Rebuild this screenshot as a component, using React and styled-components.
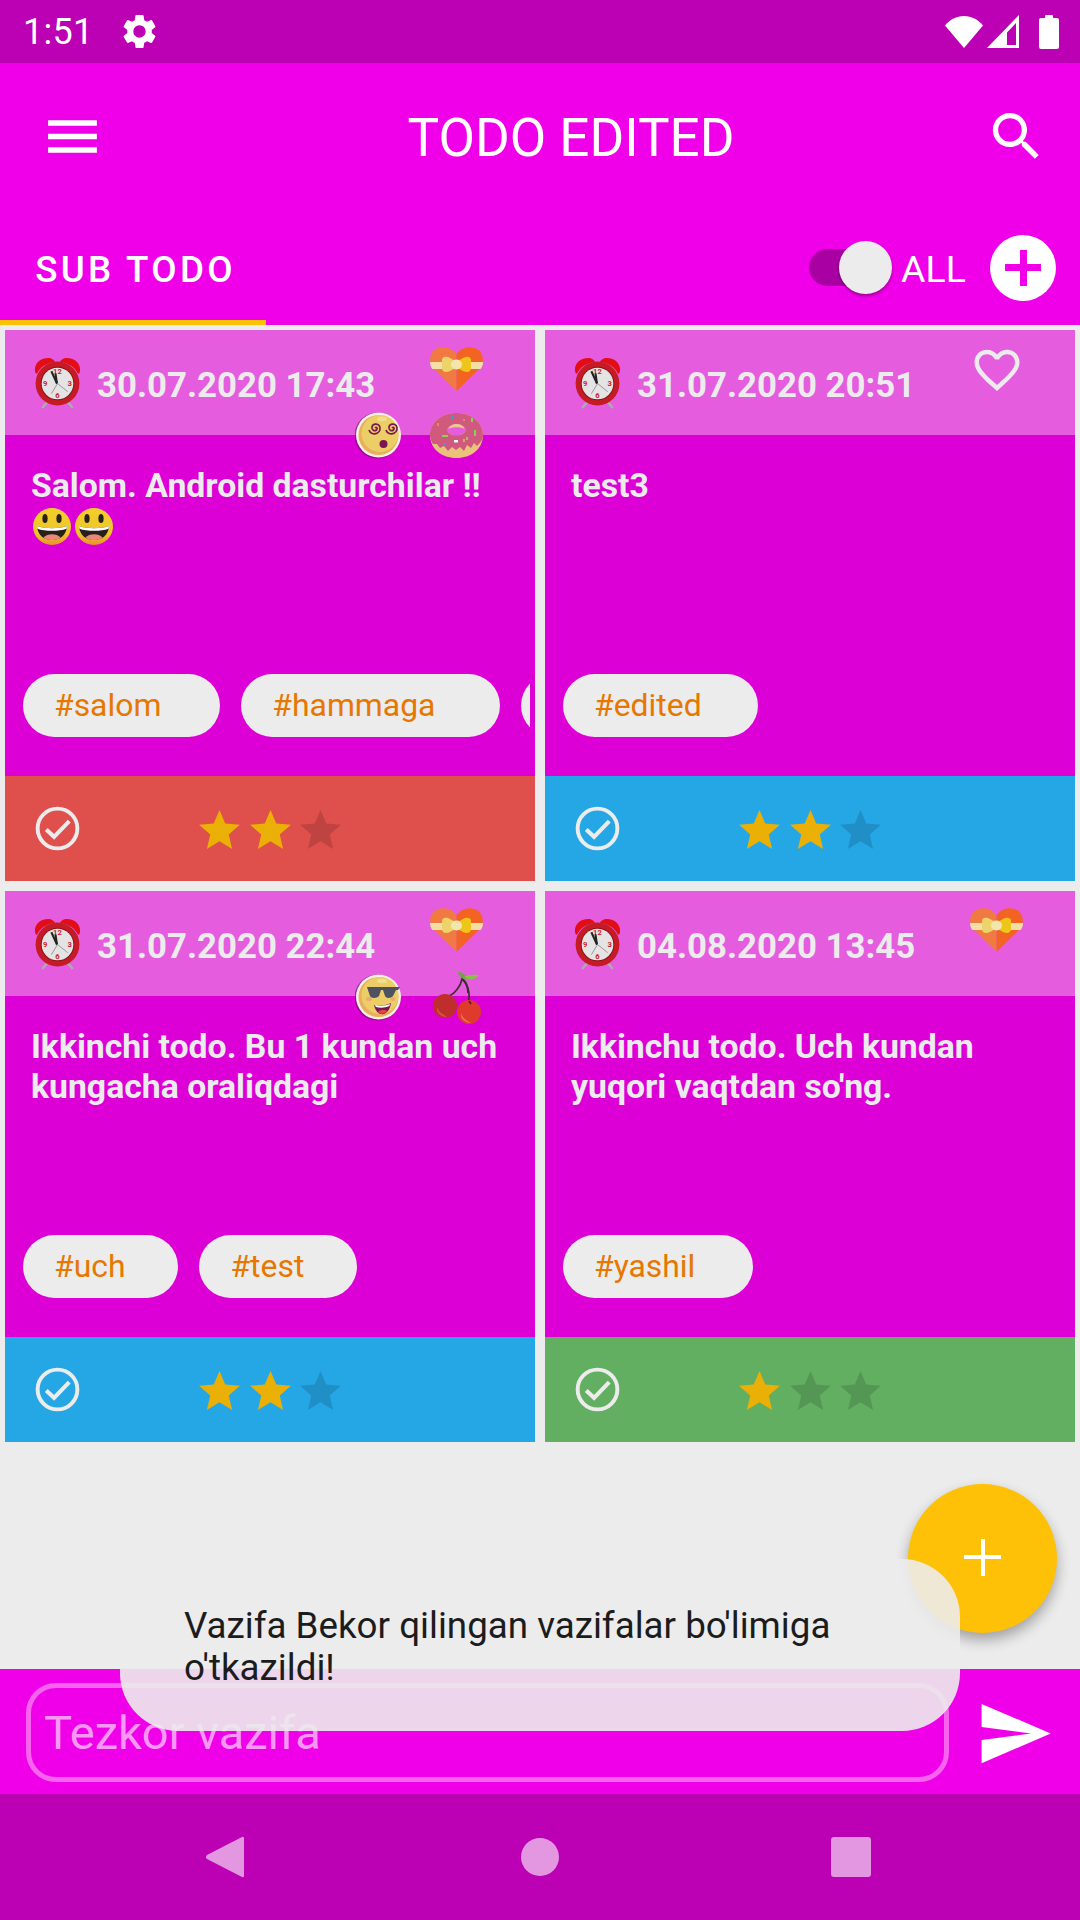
import React from 'react';
import styled, { createGlobalStyle } from 'styled-components';

const Global = createGlobalStyle`
  html, body { margin: 0; padding: 0; background: #ececec; }
  * { box-sizing: border-box; }
  body { font-family: Roboto, "Liberation Sans", sans-serif; }
`;

const Screen = styled.div`
  position: relative; width: 1080px; height: 1920px; overflow: hidden;
  display: flex; flex-direction: column; background: #ececec;
`;
const StatusBar = styled.div`
  height: 63px; background: #bc00b3; color: #fff; display: flex; align-items: center;
  padding: 0 21px 0 23px; flex: none;
`;
const Time = styled.span`font-size: 36px; line-height: 1; width: 96px; letter-spacing: .3px;`;
const StatusIcons = styled.div`margin-left: auto; display: flex; align-items: center; gap: 4px;`;
const Toolbar = styled.div`
  height: 147px; background: #f000e8; color: #fff; display: flex; align-items: center;
  padding: 0 32px 0 40px; flex: none;
`;
const Title = styled.div`flex: 1; text-align: center; font-size: 53px; line-height: 1; padding: 3px 0 0 52px;`;
const TabBar = styled.div`
  height: 115px; background: #f000e8; color: #fff; display: flex; flex: none;
`;
const Tab = styled.div`
  width: 266px; height: 115px; padding: 8px 0 0 5px; border-bottom: 5px solid #ffc107;
  display: flex; align-items: center; justify-content: center;
  font-size: 36.75px; font-weight: 500; letter-spacing: 3.3px;
`;
const Controls = styled.div`margin-left: auto; display: flex; align-items: center; padding-right: 24px;`;
const Switch = styled.div`
  position: relative; width: 83px; height: 53px; margin-right: 9px;
  &::before { content: ''; position: absolute; left: 0; top: 8px; width: 71px; height: 37px; border-radius: 19px; background: #a800a2; }
  &::after { content: ''; position: absolute; right: 0; top: 0; width: 53px; height: 53px; border-radius: 50%; background: #ececec; box-shadow: 0 2px 3px rgba(0,0,0,.35); }
`;
const SwitchLabel = styled.span`font-size: 37.5px; width: 89px; padding-top: 3px;`;
const PlusCircle = styled.div`
  width: 66px; height: 66px; border-radius: 50%; background: #fff; position: relative;
  &::before { content: ''; position: absolute; left: 15px; top: 29.5px; width: 36px; height: 7px; background: #f000e8; }
  &::after { content: ''; position: absolute; left: 29.5px; top: 15px; width: 7px; height: 36px; background: #f000e8; }
`;
const Grid = styled.div`
  display: grid; grid-template-columns: 530px 530px; grid-auto-rows: 551px; gap: 10px;
  padding: 5px; flex: none;
`;
const Card = styled.div`position: relative; display: flex; flex-direction: column; background: #dd00d6;`;
const CardHeader = styled.div`
  height: 105px; background: #e55cdf; display: flex; align-items: center; padding-left: 29px; flex: none;
`;
const DateText = styled.span`
  font-size: 34.8px; font-weight: 700; color: #ececec; margin-left: 16px; line-height: 1; padding-top: 5px;
`;
const Badge = styled.div`
  position: absolute; left: ${p => p.$x}px; top: ${p => p.$y}px; line-height: 0;
`;
const CardBody = styled.div`
  flex: 1; display: flex; flex-direction: column; min-height: 0; padding-bottom: 39px;
`;
const CardText = styled.div`
  flex: 1; padding: 31px 20px 0 26px; font-size: 33.75px; font-weight: 700; line-height: 40px; color: #ececec;
`;
const EmojiLine = styled.div`display: flex; gap: 4px; padding: 2px 0 0 2px; line-height: 0;`;
const ChipRow = styled.div`
  display: flex; gap: 21px; margin: 0 5px 0 18px; overflow: hidden; flex: none;
`;
const Chip = styled.div`
  flex: none; height: 63px; border-radius: 32px; background: #ececec; color: #e67700;
  font-size: 31.9px; display: flex; align-items: center; padding: 0 ${p => p.$pr}px 2px 31px;
`;
const CardFooter = styled.div`
  height: 105px; background: ${p => p.$color}; display: flex; align-items: center; padding-left: 30px; flex: none;
`;
const Stars = styled.div`display: flex; gap: 1.5px; margin-left: 115px; padding-top: 4px;`;
const Spacer = styled.div`flex: 1;`;
const QuickBar = styled.div`
  height: 125px; background: #f000e8; display: flex; align-items: center; padding: 0 0 0 26px; flex: none;
`;
const QuickInput = styled.div`
  width: 923px; height: 99px; margin-top: 1px; border: 5px solid #f763ef; border-radius: 30px;
  display: flex; align-items: center; padding: 0 0 0 13px;
  color: rgba(255,255,255,.6); font-size: 47px;
`;
const SendBox = styled.div`margin-left: 26px; line-height: 0; margin-top: 3px;`;
const NavRow = styled.div`
  height: 126px; background: #bc00b3; flex: none; display: flex; align-items: center; justify-content: center; gap: 272px;
  padding-right: 4px;
`;
const NavBack = styled.svg`margin-right: 5px;`;
const Fab = styled.div`
  position: absolute; left: 908px; top: 1484px; width: 149px; height: 149px; border-radius: 50%;
  background: #ffc107; box-shadow: 0 7px 14px rgba(0,0,0,.32);
  &::before { content: ''; position: absolute; left: 56px; top: 71px; width: 37px; height: 4px; background: #fff; }
  &::after { content: ''; position: absolute; left: 72.5px; top: 55px; width: 4px; height: 37px; background: #fff; }
`;
const Toast = styled.div`
  position: absolute; left: 120px; top: 1559px; width: 840px; height: 172px; border-radius: 58px;
  background: rgba(236,236,236,.9); color: #1c1c1c; font-size: 36.75px; line-height: 41.5px;
  padding: 46px 64px 0;
`;

const I = ({ d, size, fill = '#fff', style }) => (
  <svg width={size} height={size} viewBox="0 0 24 24" style={{ display: 'block', ...style }}><path d={d} fill={fill} fillRule="evenodd" /></svg>
);
const MENU = 'M3 18h18v-2H3v2zm0-5h18v-2H3v2zm0-7v2h18V6H3z';
const SEARCH = 'M15.5 14h-.79l-.28-.27C15.41 12.59 16 11.11 16 9.5 16 5.91 13.09 3 9.5 3S3 5.91 3 9.5 5.91 16 9.5 16c1.61 0 3.09-.59 4.23-1.57l.27.28v.79l5 4.99L20.49 19l-4.99-5zm-6 0C7.01 14 5 11.99 5 9.5S7.01 5 9.5 5 14 7.01 14 9.5 11.99 14 9.5 14z';
const GEAR = 'M19.14 12.94c.04-.3.06-.61.06-.94 0-.32-.02-.64-.07-.94l2.03-1.58c.18-.14.23-.41.12-.61l-1.92-3.32c-.12-.22-.37-.29-.59-.22l-2.39.96c-.5-.38-1.03-.7-1.62-.94l-.36-2.54c-.04-.24-.24-.41-.48-.41h-3.84c-.24 0-.43.17-.47.41l-.36 2.54c-.59.24-1.13.57-1.62.94l-2.39-.96c-.22-.08-.47 0-.59.22L2.74 8.87c-.12.21-.08.47.12.61l2.03 1.58c-.05.3-.09.63-.09.94s.02.64.07.94l-2.03 1.58c-.18.14-.23.41-.12.61l1.92 3.32c.12.22.37.29.59.22l2.39-.96c.5.38 1.03.7 1.62.94l.36 2.54c.05.24.24.41.48.41h3.84c.24 0 .44-.17.47-.41l.36-2.54c.59-.24 1.13-.56 1.62-.94l2.39.96c.22.08.47 0 .59-.22l1.92-3.32c.12-.22.07-.47-.12-.61l-2.01-1.58zM12 15.6c-1.98 0-3.6-1.62-3.6-3.6s1.62-3.6 3.6-3.6 3.6 1.62 3.6 3.6-1.62 3.6-3.6 3.6z';
const STAR = 'M12 17.27L18.18 21l-1.64-7.03L22 9.24l-7.19-.61L12 2 9.19 8.63 2 9.24l5.46 4.73L5.82 21z';
const SEND = 'M2.01 21L23 12 2.01 3 2 10l15 2-15 2z';
const HEART_O = 'M16.5 3c-1.74 0-3.41.81-4.5 2.09C10.91 3.81 9.24 3 7.5 3 4.42 3 2 5.42 2 8.5c0 3.78 3.4 6.86 8.55 11.54L12 21.35l1.45-1.32C18.6 15.36 22 12.28 22 8.5 22 5.42 19.58 3 16.5 3zm-4.4 15.55l-.1.1-.1-.1C7.14 14.24 4 11.39 4 8.5 4 6.5 5.5 5 7.5 5c1.54 0 3.04.99 3.57 2.36h1.87C13.46 5.99 14.96 5 16.5 5c2 0 3.5 1.5 3.5 3.5 0 2.89-3.14 5.74-7.9 10.05z';

const Wifi = () => (
  <svg width="38" height="32" viewBox="0 0 38 32" style={{ display: 'block' }}>
    <path d="M19 32 L0 9.5 C5 3.5 11.5 0 19 0 C26.5 0 33 3.5 38 9.5 Z" fill="#fff" />
  </svg>
);
const Cell = () => (
  <svg width="32" height="33" viewBox="0 0 32 33" style={{ display: 'block' }}>
    <path fillRule="evenodd" d="M32 0 V33 H0 Z M29 8 L20 17.5 V30 H29 Z" fill="#fff" />
  </svg>
);
const Battery = () => (
  <svg width="20" height="34" viewBox="0 0 20 34" style={{ display: 'block', marginLeft: 16 }}>
    <path d="M6 3 V1 a1 1 0 0 1 1-1 h6 a1 1 0 0 1 1 1 V3 h4 a2 2 0 0 1 2 2 V32 a2 2 0 0 1-2 2 H2 a2 2 0 0 1-2-2 V5 a2 2 0 0 1 2-2 Z" fill="#fff" />
  </svg>
);

const Check = () => (
  <svg width="45" height="45" viewBox="0 0 46 46" style={{ display: 'block' }}>
    <circle cx="23" cy="23" r="20.3" fill="none" stroke="#ececec" strokeWidth="4" />
    <path d="M11.5 24 L19.5 31.5 L35 15.5" fill="none" stroke="#ececec" strokeWidth="4.2" />
  </svg>
);

const GiftHeart = () => (
  <svg width="53" height="44" viewBox="0 0 53 44" style={{ display: 'block' }}>
    <path d="M26.5 44 L3 21 C-2 15 -.5 3 9 .8 C16 -1 22.5 2 26.5 7 Z" fill="#f07a42" />
    <path d="M26.5 44 L50 21 C55 15 53.5 3 44 .8 C37 -1 30.5 2 26.5 7 Z" fill="#f36322" />
    <path d="M0 15 H53 C53 18 52 20.5 50.5 22 H2.5 C1 20.5 0 18 0 15 Z" fill="#f3dfa6" />
    <path d="M12 13 C12 9 17 9 20 11 L27 15 V20 L20 24 C16 26 12 25 12 21 Z" fill="#ecd36a" />
    <path d="M41 13 C41 9 36 9 33 11 L26 15 V20 L33 24 C37 26 41 25 41 21 Z" fill="#edc51b" />
    <ellipse cx="26.5" cy="17.5" rx="5.5" ry="5" fill="#f2e6ad" />
  </svg>
);

const Donut = () => (
  <svg width="53" height="45" viewBox="0 0 53 45" style={{ display: 'block' }}>
    <path fillRule="evenodd" d="M0 22 C0 9 12 0 26.5 0 C41 0 53 9 53 22 C53 36 41 45 26.5 45 C12 45 0 36 0 22 Z M17.5 17 C17.5 20.5 22 22.5 26.5 22.5 C31 22.5 35.5 20.5 35.5 17 C35.5 13.5 31 11 26.5 11 C22 11 17.5 13.5 17.5 17 Z" fill="#ebc27c" />
    <path fillRule="evenodd" d="M0 22 C0 9 12 0 26.5 0 C41 0 53 9 53 22 C53 27 50 30 47 33 L44 30 L41 35 L37 32 L34 38 L30 34 L26 37 L22 34 L18 38 L14 33 L10 35 L7 31 L3 31 C1 28 0 25 0 22 Z M17.5 17 C17.5 20.5 22 22.5 26.5 22.5 C31 22.5 35.5 20.5 35.5 17 C35.5 13.5 31 11 26.5 11 C22 11 17.5 13.5 17.5 17 Z" fill="#cf5a7e" />
    <path d="M18.5 16 C19.5 12.5 23 11 26.5 11 C30 11 33.5 12.5 34.5 16 C31 13.8 22 13.8 18.5 16 Z" fill="#efc788" />
    <g>
      <rect x="21" y="3" width="2" height="3.5" fill="#3f9bd1" transform="rotate(-30 22 4)" />
      <rect x="41" y="5" width="2" height="4" fill="#8ccf5a" />
      <rect x="44" y="17" width="2" height="6" fill="#8ccf5a" />
      <rect x="12" y="22" width="6" height="2" fill="#8ccf5a" />
      <rect x="13" y="30" width="3" height="2.5" fill="#3f9bd1" />
      <rect x="24" y="27" width="4" height="2.5" fill="#f5f5f5" />
      <rect x="33" y="26" width="2" height="3" fill="#e6a35b" />
      <rect x="7" y="10" width="2" height="3" fill="#e4895f" />
      <rect x="33" y="6" width="2" height="2" fill="#e4895f" />
      <rect x="36" y="24" width="2" height="3" fill="#8ccf5a" />
    </g>
  </svg>
);

const FaceBase = ({ children }) => (
  <svg width="47" height="47" viewBox="0 0 47 47" style={{ display: 'block' }}>
    <circle cx="22.5" cy="23.5" r="23" fill="#5d0c58" opacity=".55" />
    <circle cx="23.5" cy="23" r="22.5" fill="#f6f0e4" />
    <circle cx="23.5" cy="23" r="20" fill="#e9ae5e" />
    <circle cx="25" cy="21.5" r="18.5" fill="#ebcf66" />
    <ellipse cx="27" cy="7" rx="5" ry="2.2" fill="#f2dd90" />
    {children}
  </svg>
);
const Spiral = ({ x, y }) => (
  <g transform={`translate(${x} ${y})`} fill="none" stroke="#7a1650" strokeWidth="1.7">
    <path d="M0 0 C1.5 -1.5 3 .5 1.5 2 C-.5 3.6 -3.5 2 -3 -1 C-2.5 -4 2 -5 4.2 -2.5 C6 0 5 4 2 5.3 C-1 6.6 -5 5.5 -6 2" />
  </g>
);
const DizzyFace = () => (
  <FaceBase>
    <Spiral x={20} y={16} />
    <Spiral x={37} y={16} />
    <circle cx="28.5" cy="32" r="4" fill="#7a1650" />
  </FaceBase>
);
const CoolFace = () => (
  <FaceBase>
    <path d="M12 13 H45 L43 16 H41 L38 22 C36 24.5 31 24.5 30 22 L28 16 H26 L24 22 C22 24.5 16 24.5 15 22 Z" fill="#4d5160" />
    <path d="M19 31 C24 32 30 32 36 29 C35 37 30 41 26 40 C22 39.5 20 35 19 31 Z" fill="#7a1650" />
    <path d="M20 31 C25 32 30 32 35 30 L34.5 32 C30 34 25 34 20.8 33 Z" fill="#fff" />
    <path d="M23 38 C25 35.5 30 35.5 32 37 C30 40 26 41 23 38 Z" fill="#e2463d" />
    <ellipse cx="14" cy="25" rx="3" ry="2" fill="#eea777" />
    <ellipse cx="38" cy="25" rx="2.5" ry="2" fill="#eea777" />
  </FaceBase>
);
const Cherries = () => (
  <svg width="48" height="54" viewBox="0 0 48 54" style={{ display: 'block' }}>
    <path d="M35 22 C35 16 33 12 29 8 C28 14 22 24 13 26" fill="none" stroke="#3d2b2f" strokeWidth="1.6" />
    <path d="M29 8 C34 10 38 23 35 31" fill="none" stroke="#3d2b2f" strokeWidth="1.6" />
    <path d="M25 1 C30 1 33 4 34 8 C29 8 26 6 25 1 Z" fill="#6fa63c" />
    <path d="M31 6 C37 3 42 4 46 4 C42 9 36 10 31 6 Z" fill="#8cbf4a" />
    <circle cx="12" cy="35" r="12" fill="#bf2d2c" />
    <path d="M4 40 C6 44 10 46 14 46 C10 43 6 42 4 36 Z" fill="#d4524c" />
    <circle cx="36" cy="41" r="12" fill="#df3a2b" />
    <path d="M28 46 C30 50 34 52 38 52 C34 49 30 48 28 42 Z" fill="#ee6a58" />
    <path d="M36 30 L38 33" stroke="#3d2b2f" strokeWidth="1.6" />
  </svg>
);
const AlarmClock = () => (
  <svg width="47" height="52" viewBox="0 0 46 51" style={{ display: 'block' }}>
    <path d="M1.5 16 C-1 9 4 1 14 1 C17 1 20 3 20.5 5 C12 6 6 10 3 16.5 Z" fill="#e30d14" />
    <path d="M44.5 16 C47 9 42 1 32 1 C29 1 26 3 25.5 5 C34 6 40 10 43 16.5 Z" fill="#e30d14" />
    <path d="M13 44 L8 50 M33 44 L38 50" stroke="#a9adad" strokeWidth="2.4" />
    <circle cx="23" cy="26" r="21.5" fill="#c41b24" />
    <circle cx="23" cy="26" r="16.5" fill="#8c1318" />
    <circle cx="23" cy="26" r="15.5" fill="#e4e4e4" />
    <g fontFamily="Roboto, sans-serif" fontSize="7.5" fontWeight="700" fill="#d4202a" textAnchor="middle">
      <text x="23" y="17">12</text>
      <text x="35" y="28.5">3</text>
      <text x="23" y="40">6</text>
      <text x="11" y="28.5">9</text>
    </g>
    <path d="M22.5 26 L17 14" stroke="#222" strokeWidth="2" />
    <path d="M22.5 26 L21 16" stroke="#222" strokeWidth="2" />
    <path d="M23 26 L33 34 M23 26 L17 36" stroke="#888" strokeWidth=".8" />
  </svg>
);
const Smile = () => (
  <svg width="38" height="37" viewBox="0 0 38 37" style={{ display: 'block' }}>
    <defs>
      <linearGradient id="smileG" x1="0" y1="0" x2="0" y2="1">
        <stop offset="0" stopColor="#f0cf2c" />
        <stop offset=".7" stopColor="#efc52a" />
        <stop offset="1" stopColor="#e9922a" />
      </linearGradient>
    </defs>
    <ellipse cx="19" cy="18.5" rx="19" ry="18.5" fill="url(#smileG)" />
    <ellipse cx="12" cy="10.5" rx="2.6" ry="4.6" fill="#2b2113" />
    <ellipse cx="26" cy="10.5" rx="2.6" ry="4.6" fill="#2b2113" />
    <path d="M4 18 C12 21 26 21 34 18 C33.5 27 27 32 19 32 C11 32 4.5 27 4 18 Z" fill="#27201a" />
    <path d="M4 18 C12 21 26 21 34 18 L33.6 20.8 C26 23.5 12 23.5 4.4 20.8 Z" fill="#fff" />
    <path d="M10.5 29.5 C14 25 24 25 27.5 29.5 C25 31.5 22 32.2 19 32.2 C16 32.2 13 31.5 10.5 29.5 Z" fill="#e98778" />
  </svg>
);

const CARDS = [
  { date: '30.07.2020 17:43', lines: 'Salom. Android dasturchilar !!', smiles: true, chips: [['#salom', 59], ['#hammaga', 65], ['', 60]], color: '#df4f4b', stars: 2, heart: true, face: 'dizzy', extra: 'donut' },
  { date: '31.07.2020 20:51', lines: 'test3', chips: [['#edited', 56]], color: '#25a7e6', stars: 2, heart: false },
  { date: '31.07.2020 22:44', lines: 'Ikkinchi todo. Bu 1 kundan uch kungacha oraliqdagi', chips: [['#uch', 53], ['#test', 53]], color: '#25a7e6', stars: 2, heart: true, face: 'cool', extra: 'cherry' },
  { date: '04.08.2020 13:45', lines: "Ikkinchu todo. Uch kundan yuqori vaqtdan so'ng.", chips: [['#yashil', 58]], color: '#62af62', stars: 1, heart: true },
];

const TodoCard = ({ c }) => (
  <Card>
    <CardHeader>
      <AlarmClock />
      <DateText>{c.date}</DateText>
    </CardHeader>
    <Badge $x={425} $y={c.heart ? 17 : 13}>
      {c.heart ? <GiftHeart /> : <I d={HEART_O} size={54} fill="#ececec" />}
    </Badge>
    {c.face && <Badge $x={350} $y={c.face === 'dizzy' ? 82 : 83}>{c.face === 'dizzy' ? <DizzyFace /> : <CoolFace />}</Badge>}
    {c.extra && <Badge $x={c.extra === 'donut' ? 425 : 428} $y={c.extra === 'donut' ? 83 : 80}>{c.extra === 'donut' ? <Donut /> : <Cherries />}</Badge>}
    <CardBody>
      <CardText>
        {c.lines}
        {c.smiles && <EmojiLine><Smile /><Smile /></EmojiLine>}
      </CardText>
      <ChipRow>
        {c.chips.map(([t, pr], i) => <Chip key={i} $pr={pr}>{t}</Chip>)}
      </ChipRow>
    </CardBody>
    <CardFooter $color={c.color}>
      <Check />
      <Stars>
        {[0, 1, 2].map(i => <I key={i} d={STAR} size={49} fill={i < c.stars ? '#ebb006' : 'rgba(0,0,0,.14)'} />)}
      </Stars>
    </CardFooter>
  </Card>
);

export default function App() {
  return (
    <Screen>
      <Global />
      <StatusBar>
        <Time>1:51</Time>
        <I d={GEAR} size={41} />
        <StatusIcons><Wifi /><Cell /><Battery /></StatusIcons>
      </StatusBar>
      <Toolbar>
        <I d={MENU} size={65} />
        <Title>TODO EDITED</Title>
        <I d={SEARCH} size={63} />
      </Toolbar>
      <TabBar>
        <Tab>SUB TODO</Tab>
        <Controls>
          <Switch />
          <SwitchLabel>ALL</SwitchLabel>
          <PlusCircle />
        </Controls>
      </TabBar>
      <Grid>{CARDS.map(c => <TodoCard key={c.date} c={c} />)}</Grid>
      <Spacer />
      <QuickBar>
        <QuickInput>Tezkor vazifa</QuickInput>
        <SendBox><I d={SEND} size={79} /></SendBox>
      </QuickBar>
      <NavRow>
        <NavBack width="38" height="42" viewBox="0 0 38 42"><path d="M36 1 a1.5 1.5 0 0 1 2 1 V40 a1.5 1.5 0 0 1-2 1 L1 23 a2.5 2.5 0 0 1 0-4 Z" fill="#e397e0" /></NavBack>
        <svg width="38" height="38" viewBox="0 0 38 38"><circle cx="19" cy="19" r="19" fill="#e397e0" /></svg>
        <svg width="40" height="40" viewBox="0 0 40 40"><rect width="40" height="40" rx="3" fill="#e397e0" /></svg>
      </NavRow>
      <Fab />
      <Toast>Vazifa Bekor qilingan vazifalar bo'limiga o'tkazildi!</Toast>
    </Screen>
  );
}
